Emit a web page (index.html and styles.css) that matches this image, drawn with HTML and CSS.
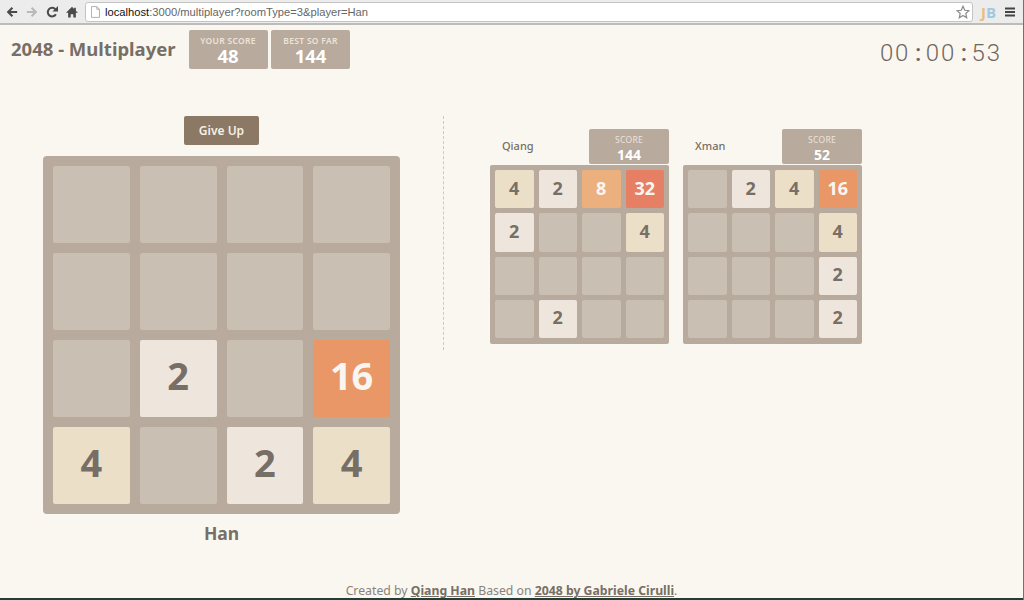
FILE: index.html
```html
<!DOCTYPE html>
<html lang="en">
<head>
    <meta charset="UTF-8">
    <meta name="viewport" content="width=device-width, initial-scale=1.0">
    <title>2048 - Multiplayer</title>
    <link rel="stylesheet" href="styles.css">
</head>
<body>
    <!-- Browser toolbar -->
    <div class="toolbar">
        <svg class="tool-icon" width="12" height="12" viewBox="0 0 14 14"><path d="M13 7H3M7.500 2 2.500 7l5 5" fill="none" stroke="#4a4a4a" stroke-width="2.400"/></svg>
        <svg class="tool-icon" width="12" height="12" viewBox="0 0 14 14"><path d="M1 7h10M6.500 2l5 5-5 5" fill="none" stroke="#b9b9b9" stroke-width="2.400"/></svg>
        <svg class="tool-icon" width="12" height="12" viewBox="0 0 14 14"><path d="M11.500 9.500A5 5 0 1 1 11 4" fill="none" stroke="#4a4a4a" stroke-width="2.400"/><path d="M14 0v6.500H7.500z" fill="#4a4a4a"/></svg>
        <svg class="tool-icon" width="12" height="12" viewBox="0 0 14 14"><path d="M7 1 0 8h2.500v5.500h3V9.500h3v4h3V8H14l-2.500-2.500V2H9.500v1.500z" fill="#4a4a4a"/></svg>
        <div class="address-bar">
            <svg width="9" height="12" viewBox="0 0 10 13"><path d="M.5.500h6l3 3v9H.5zM6.500.500v3h3" fill="#fff" stroke="#a8a8a8"/></svg>
            <span class="url"><span class="host">localhost</span>:3000/multiplayer?roomType=3&amp;player=Han</span>
            <svg class="star" width="14" height="14" viewBox="0 0 16 16"><path d="M8 1.500 10 6l4.800.5-3.600 3.200 1 4.800L8 12l-4.200 2.500 1-4.800L1.200 6.500 6 6z" fill="#fff" stroke="#8a8a8a" stroke-width="1.400"/></svg>
        </div>
        <span class="ext-logo"><span class="ext-j">J</span><span class="ext-b">B</span></span>
        <svg class="menu-icon" width="10" height="10" viewBox="0 0 10 10"><path d="M0 1.500h10M0 5h10M0 8.500h10" stroke="#444" stroke-width="2"/></svg>
    </div>

    <div class="page">
        <div class="header">
            <h1 class="title">2048 - Multiplayer</h1>
            <div class="score-box">
                <div class="score-label">YOUR SCORE</div>
                <div class="score-value">48</div>
            </div>
            <div class="score-box">
                <div class="score-label">BEST SO FAR</div>
                <div class="score-value">144</div>
            </div>
            <div class="timer">00<span class="colon">:</span>00<span class="colon">:</span>53</div>
        </div>

        <div class="game-area">
            <!-- Own board -->
            <div class="my-side">
                <a href="#" class="btn">Give Up</a>
                <div class="board">
                    <div class="cell"></div><div class="cell"></div><div class="cell"></div><div class="cell"></div>
                    <div class="cell"></div><div class="cell"></div><div class="cell"></div><div class="cell"></div>
                    <div class="cell"></div><div class="cell tile-2">2</div><div class="cell"></div><div class="cell tile-16">16</div>
                    <div class="cell tile-4">4</div><div class="cell"></div><div class="cell tile-2">2</div><div class="cell tile-4">4</div>
                </div>
                <div class="my-name">Han</div>
            </div>

            <div class="divider"></div>

            <!-- Other players -->
            <div class="opponents">
                <div class="opponent">
                    <div class="opponent-head">
                        <span class="opponent-name">Qiang</span>
                        <div class="mini-score">
                            <div class="mini-label">SCORE</div>
                            <div class="mini-value">144</div>
                        </div>
                    </div>
                    <div class="board board-small">
                        <div class="cell tile-4">4</div><div class="cell tile-2">2</div><div class="cell tile-8">8</div><div class="cell tile-32">32</div>
                        <div class="cell tile-2">2</div><div class="cell"></div><div class="cell"></div><div class="cell tile-4">4</div>
                        <div class="cell"></div><div class="cell"></div><div class="cell"></div><div class="cell"></div>
                        <div class="cell"></div><div class="cell tile-2">2</div><div class="cell"></div><div class="cell"></div>
                    </div>
                </div>
                <div class="opponent">
                    <div class="opponent-head">
                        <span class="opponent-name">Xman</span>
                        <div class="mini-score">
                            <div class="mini-label">SCORE</div>
                            <div class="mini-value">52</div>
                        </div>
                    </div>
                    <div class="board board-small">
                        <div class="cell"></div><div class="cell tile-2">2</div><div class="cell tile-4">4</div><div class="cell tile-16">16</div>
                        <div class="cell"></div><div class="cell"></div><div class="cell"></div><div class="cell tile-4">4</div>
                        <div class="cell"></div><div class="cell"></div><div class="cell"></div><div class="cell tile-2">2</div>
                        <div class="cell"></div><div class="cell"></div><div class="cell"></div><div class="cell tile-2">2</div>
                    </div>
                </div>
            </div>
        </div>

        <div class="footer">Created by <a href="#">Qiang Han</a> Based on <a href="#">2048 by Gabriele Cirulli</a>.</div>
    </div>
    <div class="window-edge"></div>
</body>
</html>
```
FILE: styles.css
```css
body {
    margin: 0;
    height: 600px;
    box-sizing: border-box;
    overflow: hidden;
    display: flex;
    flex-direction: column;
    font-family: "Noto Sans", sans-serif;
    background: #faf7f0;
    color: #776e65;
    border-right: 1px solid #8a6a5c;
}

/* browser chrome */
.toolbar {
    height: 23px;
    flex-shrink: 0;
    display: flex;
    align-items: center;
    padding-left: 6px;
    background: #ececec;
    border-bottom: 2px solid #bdbcb8;
}

.tool-icon {
    margin-right: 8px;
    flex-shrink: 0;
}

.address-bar {
    width: 888px;
    height: 20px;
    margin-left: -1px;
    box-sizing: border-box;
    display: flex;
    align-items: center;
    padding: 0 2px 0 5px;
    background: #fff;
    border: 1px solid #c4c4c4;
    border-radius: 3px;
}

.url {
    margin-left: 5px;
    flex: 1;
    font-family: "Liberation Sans", sans-serif;
    font-size: 11.200px;
    color: #666;
}

.host {
    color: #111;
}

.ext-logo {
    margin-left: 8px;
    width: 24px;
    font-family: "Open Sans", sans-serif;
    font-size: 15px;
    font-weight: 700;
}

.ext-j { color: #e3c07e; }
.ext-b { color: #9fcae2; }

.menu-icon {
    margin-left: 0;
}

.page {
    flex: 1;
    min-height: 0;
    display: flex;
    flex-direction: column;
}

.header {
    display: flex;
    align-items: flex-start;
    padding: 5px 21px 0 11px;
}

.title {
    margin: 6px 13px 0 0;
    font-size: 18.500px;
    line-height: 26px;
    font-weight: 700;
    white-space: nowrap;
}

.score-box {
    width: 79px;
    height: 39px;
    margin-right: 3.500px;
    text-align: center;
    background: #b8aa9d;
    border-radius: 2px;
    color: #fff;
}

.score-label {
    padding-top: 6px;
    font-size: 8.500px;
    line-height: 10px;
    font-weight: 600;
    letter-spacing: .3px;
    color: #eee4da;
}

.score-value {
    margin-top: 1px;
    font-size: 18.500px;
    line-height: 18px;
    font-weight: 700;
}

.timer {
    margin: 9px 0 0 auto;
    font-family: Roboto, sans-serif;
    font-size: 24px;
    line-height: 28px;
    font-weight: 300;
    letter-spacing: 1.900px;
    color: #6f675f;
}

.colon {
    display: inline-block;
    width: 15.400px;
    text-align: center;
    font-weight: 500;
    letter-spacing: 0;
}

.game-area {
    display: flex;
    align-items: flex-start;
    padding: 47px 0 0 43px;
}

.my-side {
    width: 357px;
    display: flex;
    flex-direction: column;
    align-items: center;
}

.btn {
    width: 75px;
    height: 29px;
    margin-bottom: 11px;
    text-align: center;
    font-size: 12px;
    line-height: 30px;
    font-weight: 600;
    text-decoration: none;
    color: #f5efe6;
    background: #8b7965;
    border-radius: 2px;
}

.board {
    width: 100%;
    box-sizing: border-box;
    display: grid;
    grid-template-columns: repeat(4, 1fr);
    grid-auto-rows: 77px;
    gap: 10px;
    padding: 10px;
    background: #b8aa9d;
    border-radius: 4px;
}

.cell {
    display: flex;
    align-items: center;
    justify-content: center;
    padding-bottom: 7px;
    box-sizing: border-box;
    font-size: 38px;
    font-weight: 700;
    color: #776e65;
    background: #c9bfb2;
    border-radius: 2px;
}

.tile-2 { background: #eee5dd; }
.tile-4 { background: #ebdfc8; }
.tile-8 { background: #ebb07e; color: #f9f6f2; }
.tile-16 { background: #e99766; color: #f9f6f2; }
.tile-32 { background: #e67f64; color: #f9f6f2; }

.my-name {
    margin-top: 7px;
    font-size: 17.500px;
    line-height: 24px;
    font-weight: 700;
}

.divider {
    height: 234px;
    margin-left: 43px;
    border-left: 1px dashed #cfcabf;
}

.opponents {
    display: flex;
    gap: 14px;
    margin-left: 46px;
    padding-top: 13px;
}

.opponent {
    width: 179px;
}

.opponent-head {
    display: flex;
    align-items: center;
    justify-content: space-between;
    padding-left: 12px;
}

.opponent-name {
    padding-bottom: 2px;
    font-size: 11px;
    font-weight: 500;
}

.mini-score {
    width: 80px;
    height: 35px;
    text-align: center;
    background: #b8aa9d;
    border-radius: 2px;
    color: #fff;
}

.mini-label {
    padding-top: 5px;
    font-size: 8.500px;
    line-height: 11px;
    letter-spacing: .3px;
    color: #eee4da;
}

.mini-value {
    margin-top: 2px;
    font-size: 14px;
    line-height: 16px;
    font-weight: 700;
}

.board-small {
    grid-auto-rows: 38.250px;
    gap: 5px;
    padding: 5px 5px 6px;
    margin-top: 1px;
    border-radius: 2px;
}

.board-small .cell {
    padding-bottom: 3px;
    font-size: 18px;
}

.footer {
    margin-top: auto;
    height: 19px;
    box-sizing: border-box;
    padding-top: 2px;
    text-align: center;
    font-size: 12.250px;
    line-height: 19px;
    color: #8a8279;
}

.footer a {
    font-weight: 700;
    color: #776e65;
}

.window-edge {
    height: 2px;
    flex-shrink: 0;
    background: #1f3f38;
}
```
